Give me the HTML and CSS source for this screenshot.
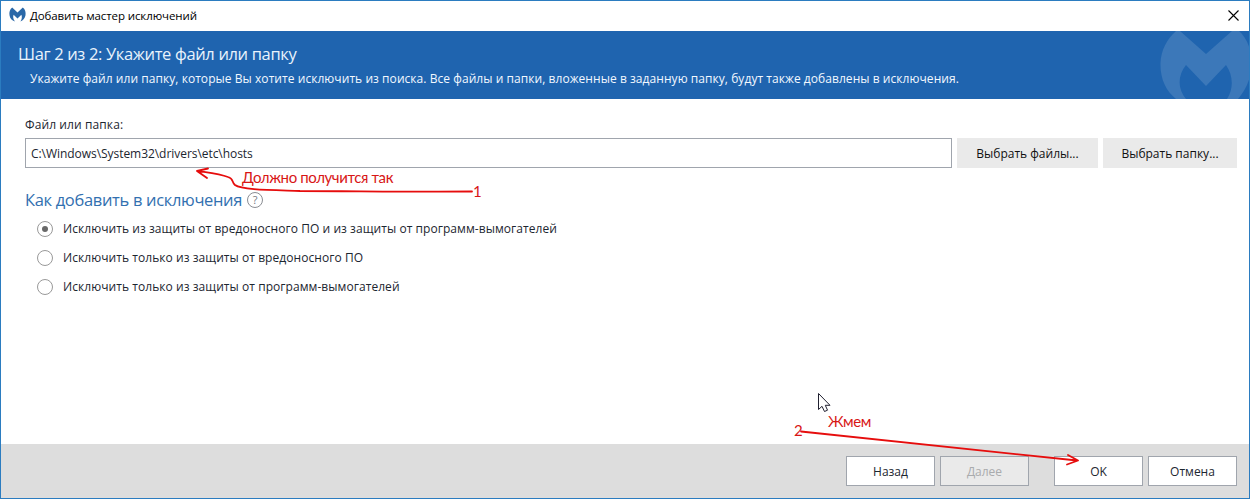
FILE: index.html
```html
<!DOCTYPE html>
<html lang="ru">
<head>
<meta charset="utf-8">
<title>Добавить мастер исключений</title>
<link rel="stylesheet" href="styles.css">
</head>
<body>
<div class="window">
  <header class="titlebar">
    <svg class="app-icon" viewBox="0 0 17 16"><path d="M3.2 0.5 L8.5 5.500 L13.8 0.5 C16.2 2.4 17 5.2 16.5 8.3 C16 11.3 14.2 13.4 11.4 14.6 C13 12.1 13.2 10 12.4 7.8 L8.5 11.4 L4.6 7.8 C3.7 10 4.2 12.1 6 14.6 C2.8 13.6 1 11.4 .5 8.3 C0 5.2 .8 2.4 3.2 .5Z"/></svg>
    <span class="app-title">Добавить мастер исключений</span>
    <svg class="close" viewBox="0 0 11 11"><path d="M.5 .5 L10.5 10.5 M10.5 .5 L.5 10.5"/></svg>
  </header>
  <section class="banner">
    <h1 class="step">Шаг 2 из 2: Укажите файл или папку</h1>
    <p class="hint">Укажите файл или папку, которые Вы хотите исключить из поиска. Все файлы и папки, вложенные в заданную папку, будут также добавлены в исключения.</p>
    <svg class="watermark" viewBox="1159 31 90 68"><path d="M1176 31 L1180 31 L1206 54 L1232 31 L1239 31 C1246 37 1251 48 1252 61 C1252 77 1246 90 1238 99 L1227 99 C1234 88 1233 75 1226 65 L1206 86 L1186 65 C1178 75 1177 88 1186 99 L1176 99 C1166 91 1160 79 1160.500 63 C1161 50 1167 39 1176 31Z"/></svg>
  </section>
  <main class="content">
    <label class="label">Файл или папка:</label>
    <div class="file-row">
      <div class="path">C:\Windows\System32\drivers\etc\hosts</div>
      <div class="pick pick-files"><span>Выбрать файлы...</span></div>
      <div class="pick pick-folder"><span>Выбрать папку...</span></div>
    </div>
    <div class="how"><h2 class="how-title">Как добавить в исключения</h2><span class="help">?</span></div>
    <div class="options">
      <div class="option"><i class="radio on"></i><span>Исключить из защиты от вредоносного ПО и из защиты от программ-вымогателей</span></div>
      <div class="option"><i class="radio"></i><span>Исключить только из защиты от вредоносного ПО</span></div>
      <div class="option"><i class="radio"></i><span>Исключить только из защиты от программ-вымогателей</span></div>
    </div>
  </main>
  <footer class="footer">
    <div class="btn">Назад</div>
    <div class="btn disabled">Далее</div>
    <div class="btn ok">OK</div>
    <div class="btn">Отмена</div>
  </footer>
</div>
<svg class="marks" viewBox="0 0 1250 499">
  <path class="arrow" d="M472 191.500 C410 192 350 191 300 191 C270 190 242 190 235 185 C231 181 234 179 228 177 C220 174 211 173 198 171 M208 168.500 L197 171 L207 178"/>
  <path class="arrow" d="M801 431.500 L1077 460.500 M1068 455 L1078 460.500 L1067 464.500"/>
  <path class="pointer" d="M818.500 393.500 V409.500 L822 406.300 L824.500 411.500 L827.500 410.200 L825.300 405.300 H830Z"/>
</svg>
<span class="note note-result">Должно получится так</span>
<span class="note note-one">1</span>
<span class="note note-two">2</span>
<span class="note note-press">Жмем</span>
</body>
</html>
```
FILE: styles.css
```css
* { box-sizing: border-box; }
body { margin: 0; position: relative; width: 1250px; height: 499px; overflow: hidden; font: 12px/16px "Open Sans", "Noto Sans", sans-serif; color: #1c2630; }
h1, h2, p { margin: 0; font-weight: 400; white-space: nowrap; }
span { white-space: nowrap; }
.window { width: 1250px; height: 499px; border: 1px solid #2b7cc0; display: flex; flex-direction: column; background: #fff; }
.titlebar { height: 30px; display: flex; align-items: center; padding: 0 10px 2px 8px; }
.app-icon { width: 17px; height: 16px; fill: #2a68a8; margin-right: 4px; }
.app-title { color: #000; font-size: 11.5px; letter-spacing: -.1px; padding-top: 2px; }
.close { width: 11px; height: 11px; margin-left: auto; fill: none; stroke: #000; stroke-width: 1.1; }
.banner { height: 68px; background: #1f64af; color: #e9f3fc; position: relative; padding: 11px 0 0 17px; }
.step { font-size: 16.5px; line-height: 24px; letter-spacing: -.35px; }
.hint { padding: 5px 0 0 12px; color: #f2f8ff; letter-spacing: .055px; }
.watermark { position: absolute; right: 0; top: 0; width: 90px; height: 68px; fill: #3c78b9; }
.content { flex: 1; padding: 18px 12px 0 24px; display: flex; flex-direction: column; align-items: stretch; }
.label { height: 21px; line-height: 16px; letter-spacing: .1px; }
.file-row { display: flex; height: 30px; }
.path { width: 927px; border: 1px solid #a0a5ad; padding-left: 5px; line-height: 29px; letter-spacing: -.05px; margin-right: 5px; }
.pick { background: #eaeaea; text-align: center; line-height: 31px; color: #101010; }
.pick-files { width: 141px; margin-right: 5px; }
.pick-folder { width: 134px; }
.how { display: flex; align-items: center; height: 24px; margin-top: 20px; }
.how-title { width: 217px; font-size: 16.5px; line-height: 24px; letter-spacing: -.33px; color: #3270b0; }
.help { width: 16px; height: 16px; border: 1px solid #8a8d93; border-radius: 50%; margin-left: 5px; color: #777b82; font-size: 11px; line-height: 14px; text-align: center; }
.options { padding: 2px 0 0 12px; letter-spacing: .06px; }
.option { display: flex; height: 29px; align-items: center; }
.radio { width: 16px; height: 16px; border: 1px solid #999; border-radius: 50%; margin-right: 10px; display: flex; align-items: center; justify-content: center; }
.on::before { content: ""; width: 6px; height: 6px; border-radius: 50%; background: #686868; }
.footer { height: 54px; background: #ddd; display: flex; justify-content: flex-end; gap: 5px; padding: 12px 12px 0 0; }
.btn { width: 89px; height: 30px; border: 1px solid #a0a5ad; background: #fff; text-align: center; line-height: 29px; }
.disabled { background: #eaeaea; color: #a9abad; }
.ok { margin-left: 20px; }
.marks { position: absolute; inset: 0; width: 1250px; height: 499px; }
.arrow { fill: none; stroke: #e60d0d; stroke-width: 1.8; stroke-linecap: round; stroke-linejoin: round; }
.pointer { fill: #fff; stroke: #202030; stroke-width: 1; }
.note { position: absolute; color: #d81616; font-family: Lato, "Open Sans", sans-serif; font-size: 15px; line-height: 18px; letter-spacing: -.4px; }
.note-result { left: 242px; top: 168px; }
.note-one { left: 473px; top: 182px; }
.note-two { left: 794px; top: 421px; }
.note-press { left: 828px; top: 412px; }
```
